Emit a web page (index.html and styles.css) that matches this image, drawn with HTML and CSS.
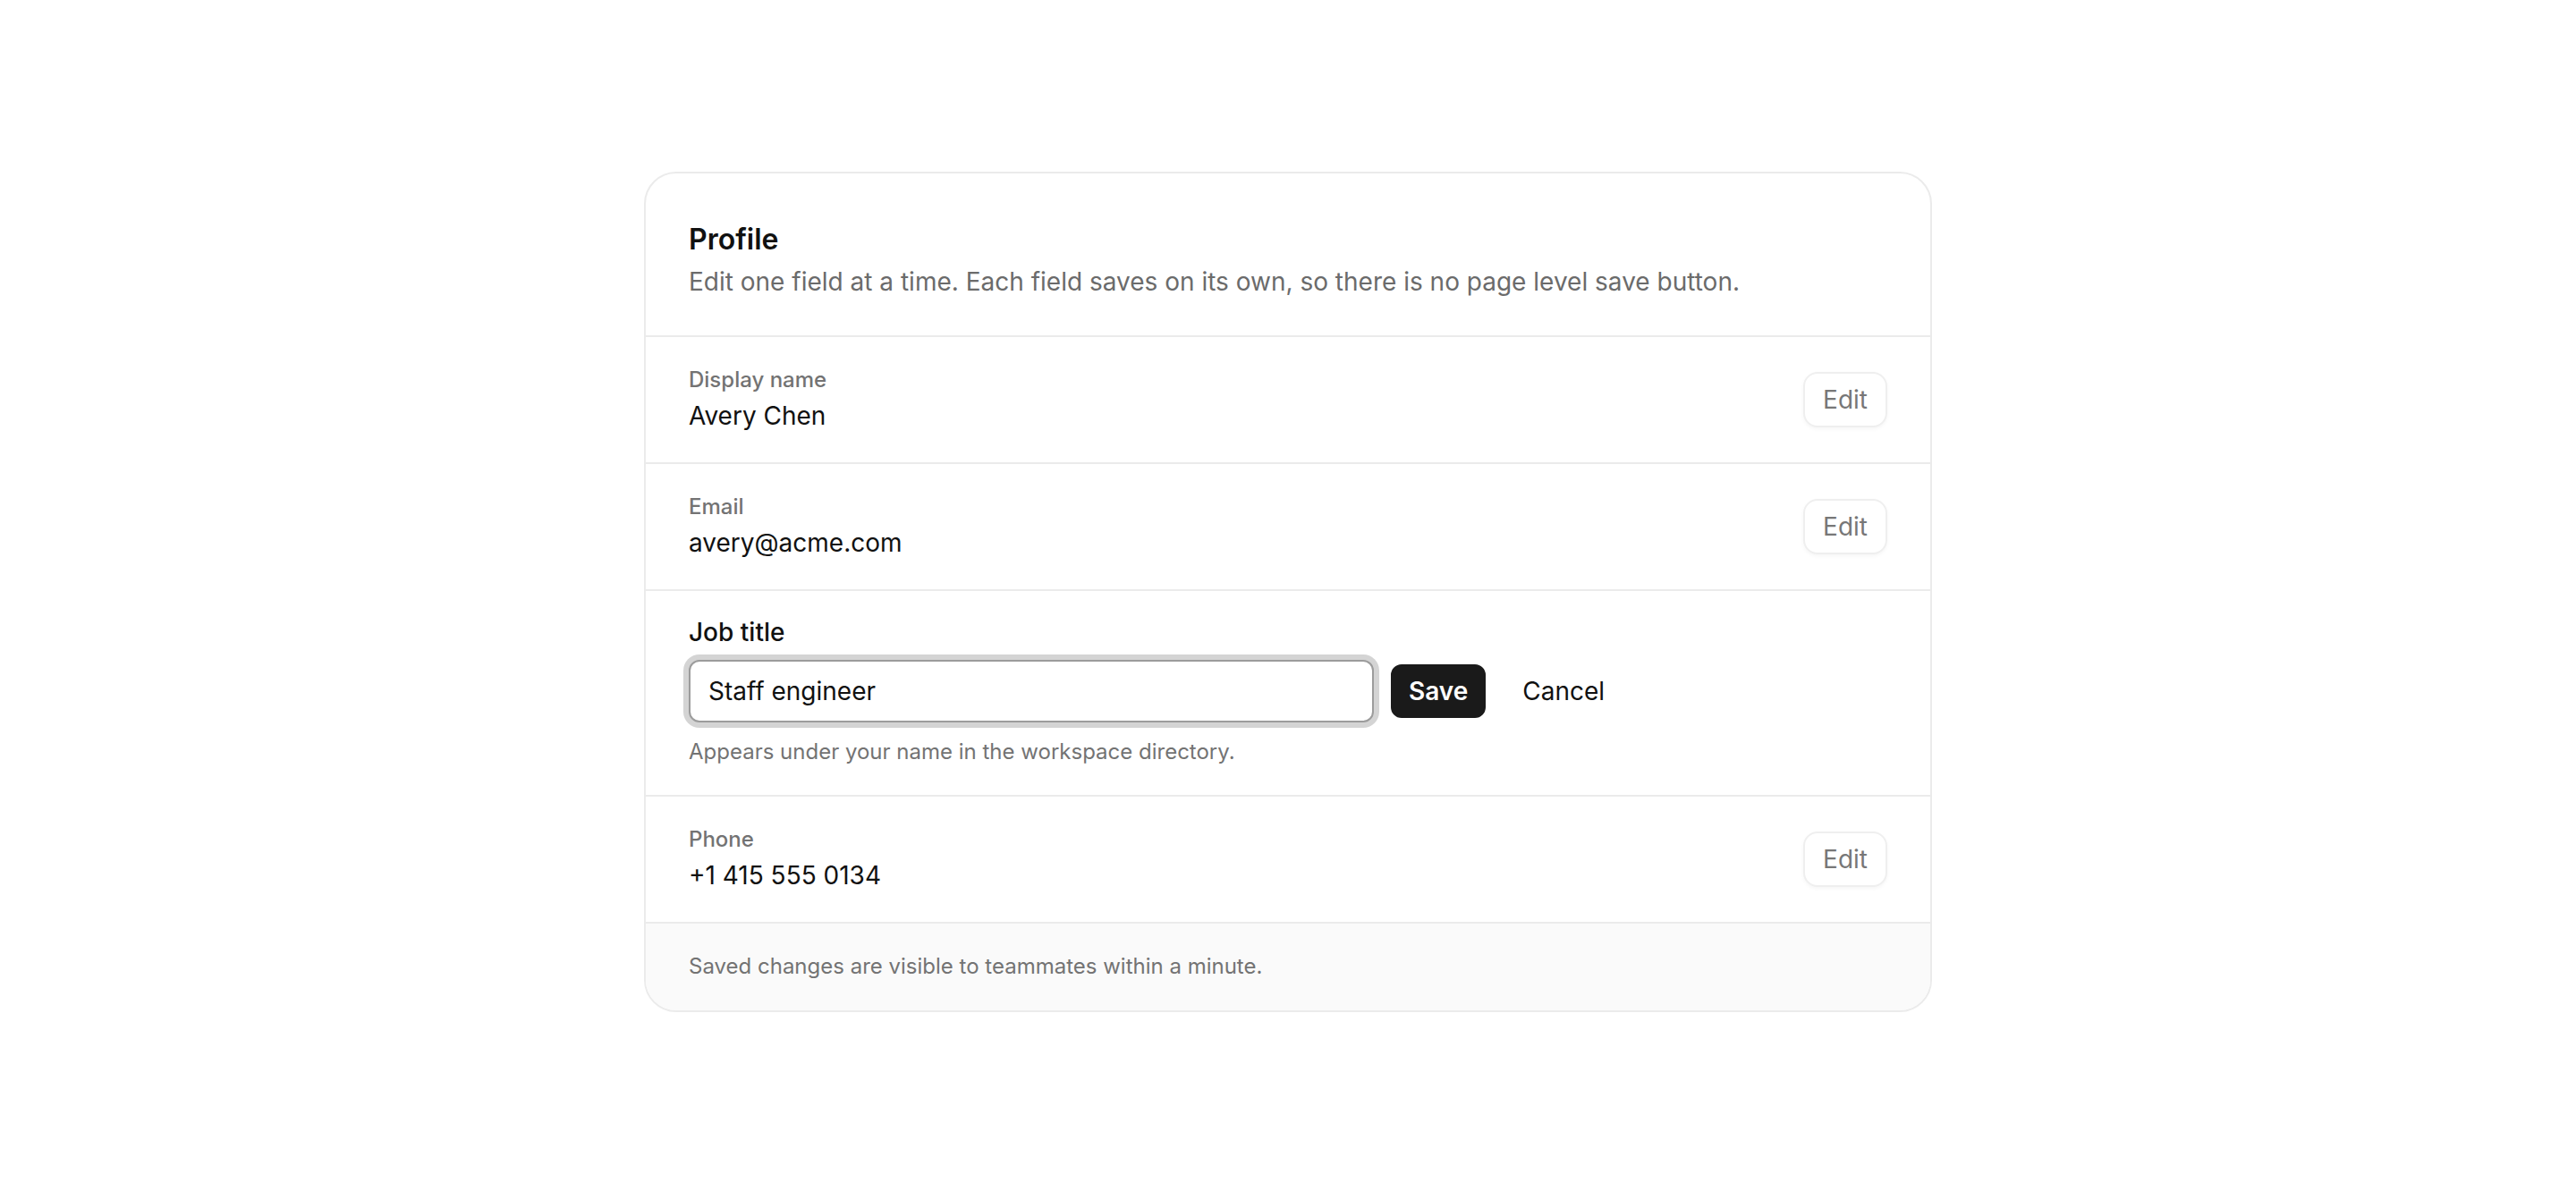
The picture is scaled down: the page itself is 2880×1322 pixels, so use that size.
FILE: index.html
```html
<!DOCTYPE html>
<html lang="en">
<head>
    <meta charset="UTF-8">
    <meta name="viewport" content="width=device-width, initial-scale=1.0">
    <title>Profile</title>
    <link rel="stylesheet" href="styles.css">
</head>
<body>
    <main class="page">
        <section class="card">
            <header class="card-header">
                <h1 class="card-title">Profile</h1>
                <p class="card-desc">Edit one field at a time. Each field saves on its own, so there is no page level save button.</p>
            </header>

            <div class="field-row">
                <div class="field-text">
                    <div class="field-label">Display name</div>
                    <div class="field-value">Avery Chen</div>
                </div>
                <button class="edit-button">Edit</button>
            </div>

            <div class="field-row">
                <div class="field-text">
                    <div class="field-label">Email</div>
                    <div class="field-value">avery@acme.com</div>
                </div>
                <button class="edit-button">Edit</button>
            </div>

            <div class="field-row editing">
                <label class="edit-label" for="job-title">Job title</label>
                <div class="edit-controls">
                    <input class="text-input" id="job-title" type="text" value="Staff engineer">
                    <button class="save-button">Save</button>
                    <button class="cancel-button">Cancel</button>
                </div>
                <p class="edit-hint">Appears under your name in the workspace directory.</p>
            </div>

            <div class="field-row">
                <div class="field-text">
                    <div class="field-label">Phone</div>
                    <div class="field-value">+1 415 555 0134</div>
                </div>
                <button class="edit-button">Edit</button>
            </div>

            <footer class="card-footer">
                Saved changes are visible to teammates within a minute.
            </footer>
        </section>
    </main>
</body>
</html>
```

FILE: styles.css
```css
body {
    margin: 0;
    padding: 0;
    background-color: #fff;
    color: #111;
    font-family: Inter, "Noto Sans", sans-serif;
}

.page {
    display: flex;
    justify-content: center;
    padding: 192px 0;
}

.card {
    width: 1440px;
    box-sizing: border-box;
    background: #fff;
    border: 2px solid #ebebeb;
    border-radius: 36px;
    overflow: hidden;
}

.card-header {
    padding: 54px 48px 40px;
}

.card-title {
    margin: 0;
    font-size: 32px;
    line-height: 40px;
    font-weight: 600;
    color: #111;
}

.card-desc {
    margin: 7px 0 0;
    font-size: 28px;
    line-height: 40px;
    color: #6b6b6b;
}

.field-row {
    display: flex;
    justify-content: space-between;
    align-items: center;
    padding: 32px 48px 32px;
    border-top: 2px solid #ebebeb;
}

.field-label {
    font-size: 24px;
    line-height: 32px;
    font-weight: 500;
    color: #737373;
}

.field-value {
    margin-top: 4px;
    font-size: 28px;
    line-height: 40px;
    color: #111;
}

.edit-button {
    height: 62px;
    padding: 0 20px;
    font-family: inherit;
    font-size: 28px;
    color: #777;
    background: #fff;
    border: 2px solid #efefef;
    border-radius: 16px;
    box-shadow: 0 2px 4px rgba(0,0,0,0.04);
}

/* the row being edited */
.field-row.editing {
    display: block;
    padding: 28px 48px 32px;
}

.edit-label {
    display: block;
    margin-bottom: 13px;
    font-size: 28px;
    line-height: 36px;
    font-weight: 500;
    color: #111;
}

.edit-controls {
    display: flex;
    align-items: center;
    gap: 19px;
}

.text-input {
    width: 766px;
    height: 70px;
    box-sizing: border-box;
    padding: 0 20px;
    font-family: inherit;
    font-size: 28px;
    color: #111;
    border: 2px solid #9c9c9c;
    border-radius: 12px;
    box-shadow: 0 0 0 6px #d4d4d4;
    outline: none;
}

.save-button,
.cancel-button {
    height: 60px;
    padding: 0 20px;
    font-family: inherit;
    font-size: 28px;
    border-radius: 12px;
}

.save-button {
    padding: 0 18px;
    font-weight: 600;
    color: #fff;
    background: #1a1a1a;
    border: 2px solid #1a1a1a;
}

.cancel-button {
    font-weight: 400;
    color: #111;
    background: transparent;
    border: 2px solid transparent;
}

.edit-hint {
    margin: 17px 0 0;
    font-size: 24px;
    line-height: 32px;
    color: #737373;
}

.card-footer {
    padding: 32px 48px 33px;
    font-size: 24px;
    line-height: 32px;
    color: #737373;
    background: #fafafa;
    border-top: 2px solid #ebebeb;
}
```
